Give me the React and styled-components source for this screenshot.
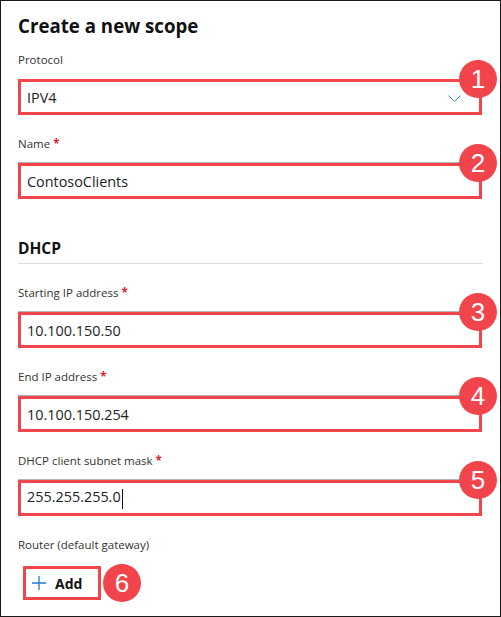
import styled, { createGlobalStyle } from "styled-components";

const Global = createGlobalStyle`
  html, body {
    margin: 0;
    padding: 0;
    background: #fff;
  }
  * {
    box-sizing: border-box;
  }
`;

const RED = "#f2454b";

const Frame = styled.div`
  width: 501px;
  height: 617px;
  border: 1px solid #1a1a1a;
  padding: 0 17px;
  font-family: "Open Sans", "Noto Sans", sans-serif;
  color: #222;
  overflow: hidden;
`;

const Title = styled.h1`
  margin: 13px 0 0 0;
  font-size: 18.7px;
  line-height: 24px;
  font-weight: 700;
  color: #111;
`;

const Group = styled.div`
  margin-top: ${(p) => p.$top || 19}px;
`;

const Label = styled.div`
  font-size: 11.5px;
  line-height: 20px;
  color: #333;
`;

const Star = styled.span`
  color: #e0202a;
  font-weight: 700;
  margin-left: 3px;
`;

const Box = styled.div`
  position: relative;
  margin-top: 9px;
  width: 464px;
  height: 36px;
  border: 3px solid ${RED};
  padding: 0 6px;
  display: flex;
  align-items: center;
  justify-content: space-between;
  font-size: 14.4px;
  color: #222;
  box-shadow: ${(p) => (p.$plain ? "none" : "0 -1px 0 #b5b5b5")};
`;

const Caret = styled.span`
  display: inline-block;
  width: 1px;
  height: 20px;
  background: #111;
  margin-left: 1px;
  vertical-align: middle;
`;

const Badge = styled.div`
  width: 38px;
  height: 38px;
  border-radius: 50%;
  background: ${RED};
  color: #fff;
  font-family: "Liberation Sans", Arial, sans-serif;
  font-size: 26px;
  display: flex;
  align-items: center;
  justify-content: center;
  flex: none;
`;

const CornerBadge = styled(Badge)`
  position: absolute;
  top: -22px;
  right: -18px;
`;

const Chevron = styled.svg`
  margin-right: 12px;
  margin-top: 4px;
`;

const Section = styled.h2`
  margin: 39px 0 0 0;
  font-size: 15.5px;
  line-height: 20px;
  font-weight: 700;
  color: #111;
  padding-bottom: 5px;
  border-bottom: 1px solid #dcdcdc;
`;

const AddRow = styled.div`
  margin-top: 9px;
  margin-left: 5px;
  display: flex;
  align-items: center;
  gap: 2px;
`;

const AddButton = styled.div`
  width: 78px;
  height: 34px;
  border: 3px solid ${RED};
  display: flex;
  align-items: center;
  gap: 9px;
  padding-left: 6px;
  font-size: 14px;
  font-weight: 700;
  color: #111;
`;

const Field = ({ label, required, value, n, caret, plain, children }) => (
  <Group>
    <Label>
      {label}
      {required && <Star>*</Star>}
    </Label>
    <Box $plain={plain}>
      <span>
        {value}
        {caret && <Caret />}
      </span>
      {children}
      <CornerBadge>{n}</CornerBadge>
    </Box>
  </Group>
);

const App = () => {
  return (
    <>
      <Global />
      <Frame>
        <Title>Create a new scope</Title>
        <Group $top={12}>
          <Label>Protocol</Label>
          <Box $plain>
            <span>IPV4</span>
            <Chevron width="13" height="8" viewBox="0 0 13 8">
              <path d="M0.5 0.5 L6.5 6.5 L12.5 0.5" fill="none" stroke="#3a8be0" strokeWidth="1" />
            </Chevron>
            <CornerBadge>1</CornerBadge>
          </Box>
        </Group>
        <Field label="Name" required value="ContosoClients" n="2" />
        <Section>DHCP</Section>
        <Field label="Starting IP address" required value="10.100.150.50" n="3" />
        <Field label="End IP address" required value="10.100.150.254" n="4" />
        <Field label="DHCP client subnet mask" required value="255.255.255.0" n="5" caret />
        <Group>
          <Label>Router (default gateway)</Label>
          <AddRow>
            <AddButton>
              <svg width="14" height="14" viewBox="0 0 14 14">
                <path d="M7 0 V14 M0 7 H14" stroke="#1f78d6" strokeWidth="1.3" fill="none" />
              </svg>
              <span>Add</span>
            </AddButton>
            <Badge>6</Badge>
          </AddRow>
        </Group>
      </Frame>
    </>
  );
};

export default App;
